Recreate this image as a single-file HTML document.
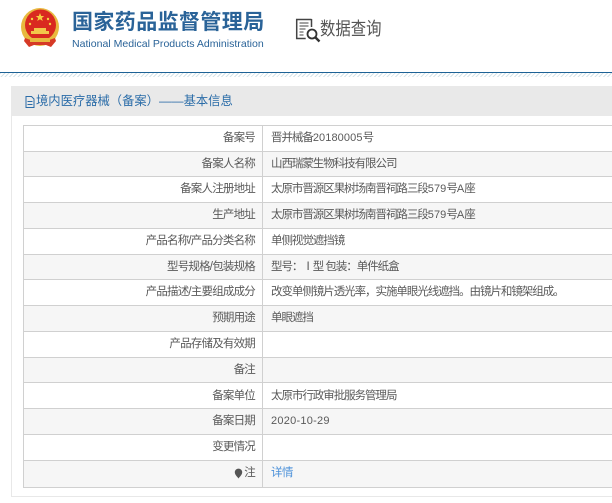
<!DOCTYPE html>
<html lang="zh"><head><meta charset="utf-8">
<style>
html,body{margin:0;padding:0;width:612px;height:503px;overflow:hidden;background:#fff}
body{position:relative;font-family:"Liberation Sans","Noto Sans CJK SC",sans-serif;color:#555}
.a{position:absolute;white-space:nowrap}
.title{left:72px;top:10px;font-size:21px;line-height:26px;font-weight:700;color:#2a6398;letter-spacing:.4px}
.en{left:72px;top:37px;font-size:10.55px;line-height:14px;color:#2a6398}
.q{left:320px;top:17px;font-size:18px;line-height:24px;color:#555;transform:scaleX(.855);transform-origin:0 0}
.line{left:0;top:72px;width:612px;height:1px;background:#1d6296}
.hatch{left:0;top:73px;width:612px;height:4px;background:repeating-linear-gradient(135deg,#d5e3e8 0 1px,#fff 1px 3px)}
.panel{left:11px;top:86px;width:601px;height:411px;box-sizing:border-box;border:1px solid #e8e8e8;border-right:0}
.head{left:11px;top:86px;width:601px;height:30px;background:#e9e9e9}
.ht{left:36px;top:93px;font-size:12.3px;line-height:17px;color:#2a6ca8}
.r{left:23px;width:589px;height:26px;box-sizing:border-box;border-top:1px solid #d0d0d0;border-left:1px solid #d0d0d0;font-size:11.5px;line-height:24px}
.r.g{background:#f6f6f6}
.r b{font-weight:400;position:absolute;left:0;width:231px;text-align:right;color:#5a5a5a;letter-spacing:-.8px}
.r i{font-style:normal;position:absolute;left:238px;top:0;height:26px;padding-left:8px;border-left:1px solid #d0d0d0;color:#5a5a5a;letter-spacing:-1.05px}
.r i span{letter-spacing:.1px;font-size:11px}
.bot{left:23px;top:487px;width:589px;height:1px;background:#d0d0d0}
</style></head><body>
<svg class="a" style="left:20px;top:7px" width="40" height="42" viewBox="0 0 40 42">
<circle cx="20" cy="20" r="19" fill="#e8b93f"/>
<circle cx="20.500" cy="18" r="15.500" fill="#d92a20"/>
<path d="M20 6l1.200 3h3l-2.400 2 1 3-2.800-1.800-2.800 1.800 1-3-2.400-2h3z" fill="#f5d040"/>
<circle cx="12" cy="12" r="1.200" fill="#f5d040"/><circle cx="28" cy="12" r="1.200" fill="#f5d040"/><circle cx="10" cy="17" r="1.200" fill="#f5d040"/><circle cx="30" cy="17" r="1.200" fill="#f5d040"/>
<path d="M11 27h18v-3h-3v-3h-12v3h-3z" fill="#f2c84a"/>
<path d="M5 31q15 6 30 0l1 3-5 6-5-2h-12l-5 2-5-6z" fill="#d63a26"/>
<path d="M10 31h20v4h-20z" fill="#e8b93f"/>
</svg>
<div class="a title">国家药品监督管理局</div>
<div class="a en">National Medical Products Administration</div>
<svg class="a" style="left:295px;top:18px" width="27" height="26" viewBox="0 0 27 26" fill="none" stroke="#444">
<path d="M16.500 1.500H1.700v19h9" stroke-width="1.500"/><path d="M16.500 1v8" stroke-width="1.500"/>
<path d="M4.500 5h9M4.500 8h9M4.500 11h6M4.500 14h4M4.500 17h4" stroke-width="1"/>
<circle cx="17" cy="16" r="4.500" stroke-width="1.800" stroke="#333"/><path d="M20.500 19.500l4 4" stroke-width="2.400" stroke="#333"/>
</svg>
<div class="a q">数据查询</div>
<div class="a line"></div><div class="a hatch"></div>
<div class="a panel"></div><div class="a head"></div>
<svg class="a" style="left:25px;top:96px" width="10" height="12" viewBox="0 0 10 12" fill="none" stroke="#2a6ca8"><path d="M1 .5h5.500l2.500 2.500v8.500h-8zM2.500 5.500h5M2.500 8.500h5"/></svg>
<div class="a ht">境内医疗器械（备案）——基本信息</div>

<div class="a r" style="top:125px"><b>备案号</b><i>晋并械备<span>20180005</span>号</i></div>
<div class="a r g" style="top:151px"><b>备案人名称</b><i>山西瑞蒙生物科技有限公司</i></div>
<div class="a r" style="top:176px"><b>备案人注册地址</b><i>太原市晋源区果树场南晋祠路三段<span>579</span>号<span>A</span>座</i></div>
<div class="a r g" style="top:202px"><b>生产地址</b><i>太原市晋源区果树场南晋祠路三段<span>579</span>号<span>A</span>座</i></div>
<div class="a r" style="top:228px"><b>产品名称/产品分类名称</b><i>单侧视觉遮挡镜</i></div>
<div class="a r g" style="top:254px"><b>型号规格/包装规格</b><i>型号：Ⅰ型 包装：单件纸盒</i></div>
<div class="a r" style="top:279px"><b>产品描述/主要组成成分</b><i>改变单侧镜片透光率，实施单眼光线遮挡。由镜片和镜架组成。</i></div>
<div class="a r g" style="top:305px"><b>预期用途</b><i>单眼遮挡</i></div>
<div class="a r" style="top:331px"><b>产品存储及有效期</b><i></i></div>
<div class="a r g" style="top:357px"><b>备注</b><i></i></div>
<div class="a r" style="top:382px"><b style="top:1px">备案单位</b><i style="line-height:26px">太原市行政审批服务管理局</i></div>
<div class="a r g" style="top:408px"><b>备案日期</b><i><span style="letter-spacing:.25px">2020-10-29</span></i></div>
<div class="a r" style="top:434px"><b>变更情况</b><i></i></div>
<div class="a r g" style="top:460px;height:27px"><b>注</b><i style="color:#4a90d9;height:27px;letter-spacing:-.5px">详情</i></div>
<svg class="a" style="left:234px;top:468px" width="9" height="11" viewBox="0 0 9 11"><path d="M4.500 10.500C2.500 8 .8 6.500.8 4.300a3.700 3.700 0 0 1 7.400 0c0 2.200-1.700 3.700-3.700 6.200z" fill="#555"/></svg>
<div class="a bot"></div>
</body></html>
